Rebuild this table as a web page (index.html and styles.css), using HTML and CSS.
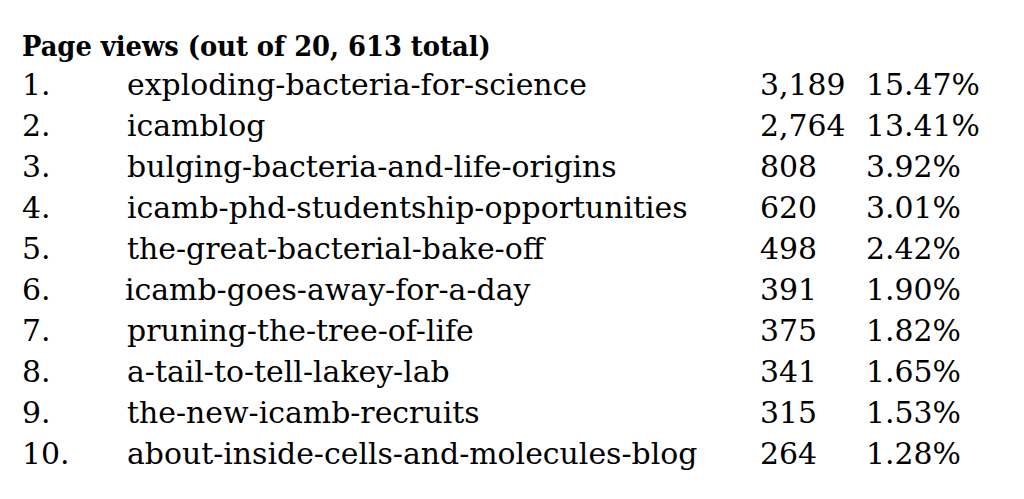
FILE: index.html
```html
<!DOCTYPE html>
<html>
<head>
<meta charset="utf-8">
<link rel="stylesheet" href="styles.css">
</head>
<body>
<div class="sheet">
  <div class="title">Page views (out of 20, 613 total)</div>
  <div class="table">
    <div class="row"><span class="num">1.</span><span class="slug">exploding-bacteria-for-science</span><span class="views">3,189</span><span class="pct">15.47%</span></div>
    <div class="row"><span class="num">2.</span><span class="slug">icamblog</span><span class="views">2,764</span><span class="pct">13.41%</span></div>
    <div class="row"><span class="num">3.</span><span class="slug">bulging-bacteria-and-life-origins</span><span class="views">808</span><span class="pct">3.92%</span></div>
    <div class="row"><span class="num">4.</span><span class="slug">icamb-phd-studentship-opportunities</span><span class="views">620</span><span class="pct">3.01%</span></div>
    <div class="row"><span class="num">5.</span><span class="slug">the-great-bacterial-bake-off</span><span class="views">498</span><span class="pct">2.42%</span></div>
    <div class="row"><span class="num">6.</span><span class="slug shift">icamb-goes-away-for-a-day</span><span class="views">391</span><span class="pct">1.90%</span></div>
    <div class="row"><span class="num">7.</span><span class="slug">pruning-the-tree-of-life</span><span class="views">375</span><span class="pct">1.82%</span></div>
    <div class="row"><span class="num">8.</span><span class="slug">a-tail-to-tell-lakey-lab</span><span class="views">341</span><span class="pct">1.65%</span></div>
    <div class="row"><span class="num">9.</span><span class="slug">the-new-icamb-recruits</span><span class="views">315</span><span class="pct">1.53%</span></div>
    <div class="row"><span class="num">10.</span><span class="slug">about-inside-cells-and-molecules-blog</span><span class="views">264</span><span class="pct">1.28%</span></div>
  </div>
</div>
</body>
</html>
```
FILE: styles.css
```css
html, body {
  margin: 0;
  padding: 0;
  background: #fff;
}
.sheet {
  padding: 28px 0 0 22px;
  font-family: "DejaVu Serif", serif;
  color: #000;
}
.title {
  font-family: "DejaVu Serif Condensed", "DejaVu Serif", serif;
  font-stretch: condensed;
  font-weight: bold;
  font-size: 28.7px;
  line-height: 36px;
}
.row {
  display: grid;
  grid-template-columns: 105px 633px 106px auto;
  font-size: 29.9px;
  line-height: 41px;
  height: 41px;
}
.shift {
  margin-left: -2px;
}
```
